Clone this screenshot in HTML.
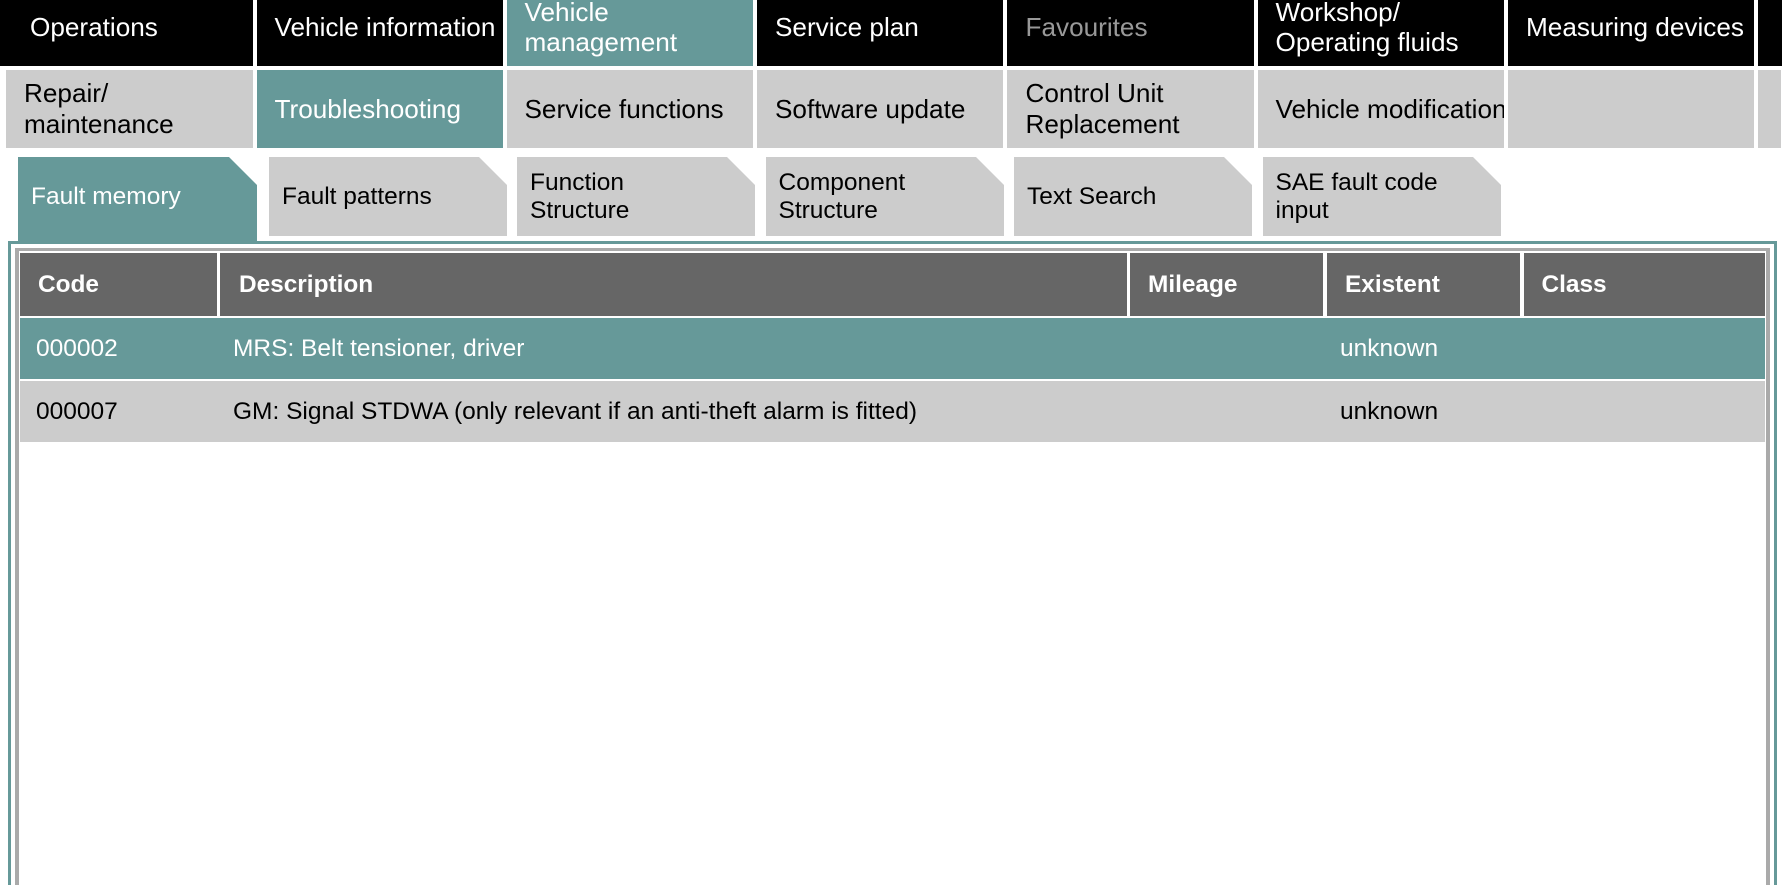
<!DOCTYPE html>
<html lang="en">
<head>
<meta charset="utf-8">
<title>Fault memory</title>
<style>
html,body{margin:0;padding:0;background:#fff;width:1782px;height:885px;overflow:hidden}
body{position:relative;font-family:"Liberation Sans",Arial,sans-serif}
.c{position:absolute;display:flex;align-items:center;box-sizing:border-box;overflow:hidden}
.n{font-size:26.15px;line-height:30px;color:#fff;background:#000;top:-12px;height:78px}
.s{font-size:26.15px;line-height:31px;color:#000;background:#ccc;top:70px;height:78px}
.t{font-size:24.5px;line-height:28px;color:#000;background:#ccc;top:157px;height:79px;clip-path:polygon(0 0,calc(100% - 28px) 0,100% 28px,100% 100%,0 100%)}
.h{font-size:24.4px;font-weight:bold;color:#fff;background:#666;top:253px;height:63px;white-space:nowrap}
.r{left:20px;width:1745px;background:#ccc}
.x{position:absolute;font-size:24.5px;line-height:28px;white-space:nowrap}
.a{background:#669999;color:#fff}
.b{position:absolute}
</style>
</head>
<body>
<div class="c n" style="left:0;width:253px;padding-left:30px">Operations</div>
<div class="c n" style="left:257px;width:246px;padding-left:17.5px;white-space:nowrap">Vehicle information</div>
<div class="c n a" style="left:507px;width:246px;padding-left:17.5px">Vehicle<br>management</div>
<div class="c n" style="left:757px;width:246px;padding-left:18px">Service plan</div>
<div class="c n" style="left:1007px;width:247px;padding-left:18.5px;color:#999">Favourites</div>
<div class="c n" style="left:1258px;width:246px;padding-left:17.5px">Workshop/<br>Operating fluids</div>
<div class="c n" style="left:1508px;width:246px;padding-left:18px;white-space:nowrap">Measuring devices</div>
<div class="c n" style="left:1758px;width:24px"></div>

<div class="c s" style="left:6px;width:247px;padding-left:18px">Repair/<br>maintenance</div>
<div class="c s a" style="left:257px;width:246px;padding-left:17.5px">Troubleshooting</div>
<div class="c s" style="left:507px;width:246px;padding-left:17.5px">Service functions</div>
<div class="c s" style="left:757px;width:246px;padding-left:18px">Software update</div>
<div class="c s" style="left:1007px;width:247px;padding-left:18.5px">Control Unit<br>Replacement</div>
<div class="c s" style="left:1258px;width:246px;padding-left:17.5px;white-space:nowrap">Vehicle modification</div>
<div class="c s" style="left:1508px;width:246px"></div>
<div class="c s" style="left:1758px;width:23px"></div>

<div class="c t a" style="left:18px;width:239px;height:84px;padding:0 0 5px 13px">Fault memory</div>
<div class="c t" style="left:269px;width:238px;padding-left:13px">Fault patterns</div>
<div class="c t" style="left:517px;width:238px;padding-left:13px">Function<br>Structure</div>
<div class="c t" style="left:766px;width:238px;padding-left:12.5px">Component<br>Structure</div>
<div class="c t" style="left:1014px;width:238px;padding-left:13px">Text Search</div>
<div class="c t" style="left:1263px;width:238px;padding-left:12.5px">SAE fault code<br>input</div>

<div class="b" style="left:8px;top:241px;width:1769px;height:3px;background:#669999"></div>
<div class="b" style="left:8px;top:241px;width:3px;height:644px;background:#669999"></div>
<div class="b" style="left:1774px;top:241px;width:3px;height:644px;background:#669999"></div>
<div class="b" style="left:15px;top:248px;width:1755px;height:3px;background:#aaa"></div>
<div class="b" style="left:15px;top:248px;width:4px;height:637px;background:#aaa"></div>
<div class="b" style="left:1766px;top:248px;width:4px;height:637px;background:#aaa"></div>

<div class="c h" style="left:20px;width:197px;padding-left:18px">Code</div>
<div class="c h" style="left:220px;width:907px;padding-left:19px">Description</div>
<div class="c h" style="left:1130px;width:193px;padding-left:18px">Mileage</div>
<div class="c h" style="left:1327px;width:193px;padding-left:18px">Existent</div>
<div class="c h" style="left:1524px;width:241px;padding-left:17.5px">Class</div>

<div class="b r a" style="top:318px;height:61px"></div>
<div class="b r" style="top:381px;height:61px"></div>

<div class="x" style="left:36px;top:335px;color:#fff">000002</div>
<div class="x" style="left:233px;top:335px;color:#fff">MRS: Belt tensioner, driver</div>
<div class="x" style="left:1340px;top:335px;color:#fff">unknown</div>
<div class="x" style="left:36px;top:398px;color:#000">000007</div>
<div class="x" style="left:233px;top:398px;color:#000">GM: Signal STDWA (only relevant if an anti-theft alarm is fitted)</div>
<div class="x" style="left:1340px;top:398px;color:#000">unknown</div>
</body>
</html>
